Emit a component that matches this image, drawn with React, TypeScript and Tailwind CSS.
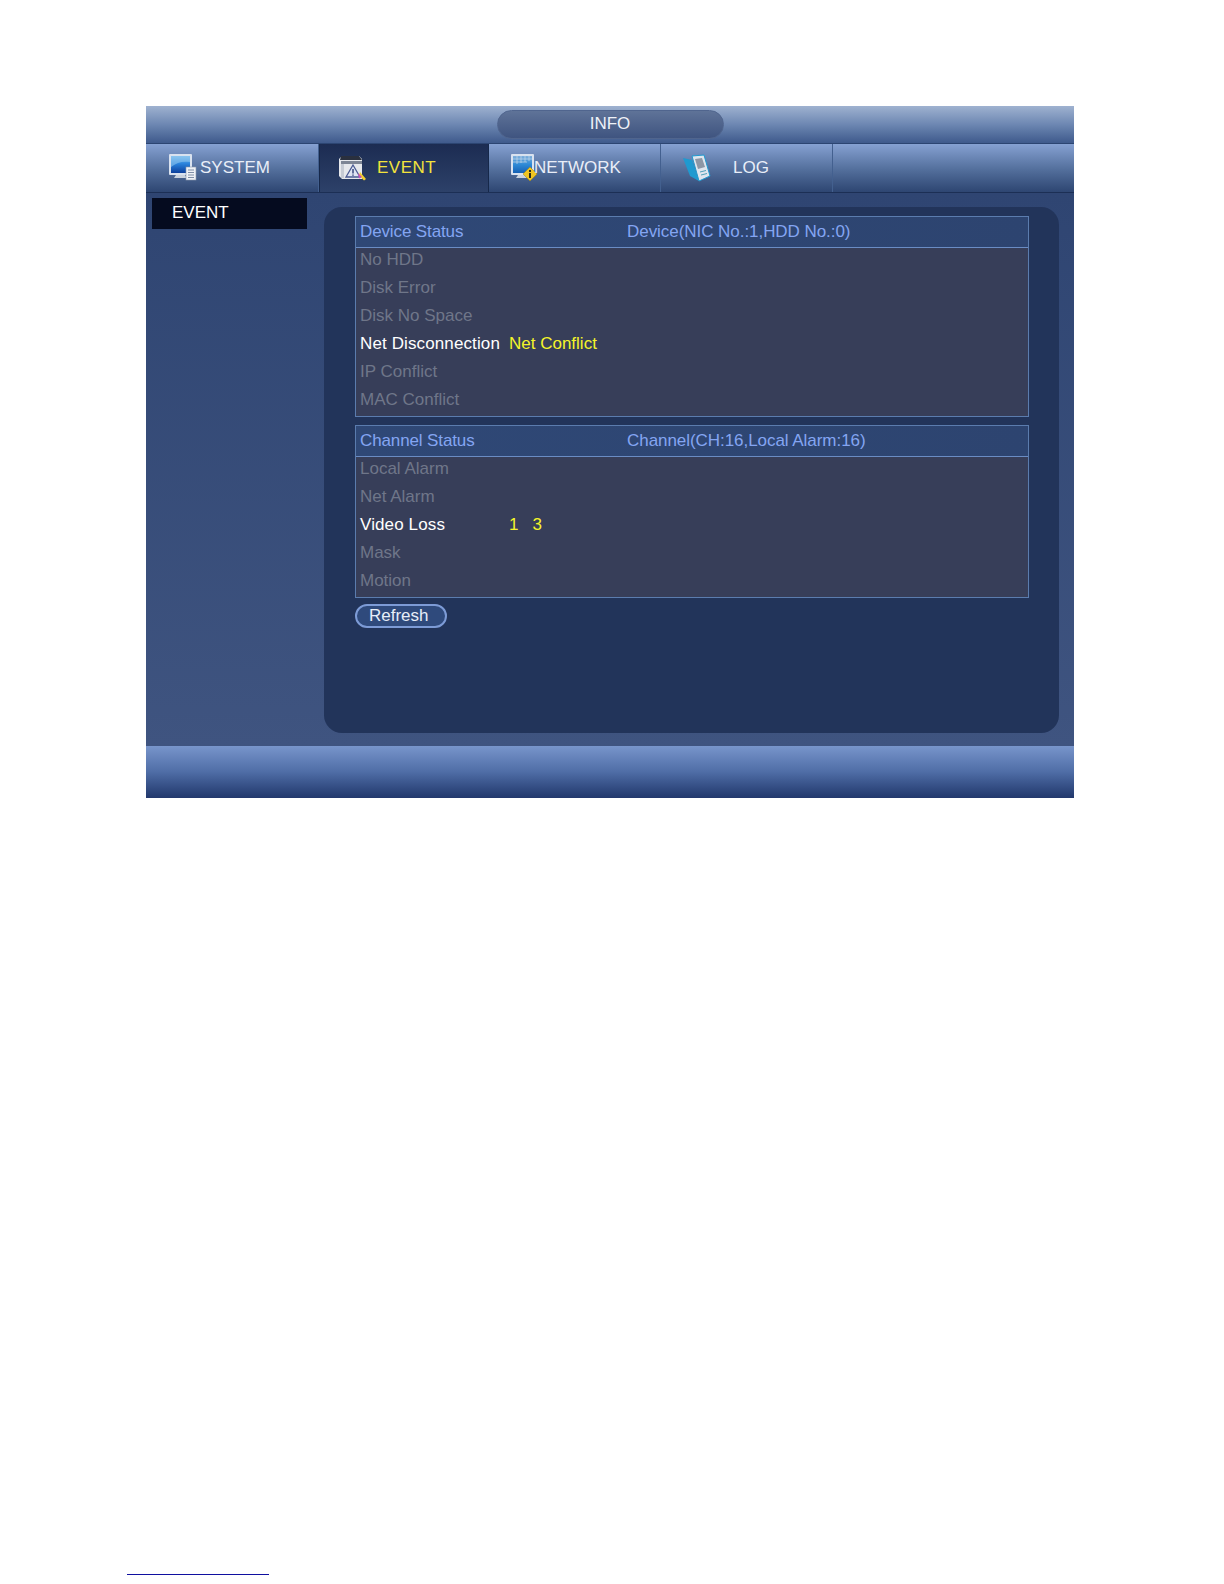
const FONT = "font-['Liberation_Sans',Arial,sans-serif]";

function SystemIcon() {
  return (
    <svg width="30" height="30" viewBox="0 0 30 30" className="shrink-0">
      <defs>
        <linearGradient id="sysScreen" x1="0" y1="0" x2="0" y2="1">
          <stop offset="0" stopColor="#7fc0f0" />
          <stop offset="0.45" stopColor="#2a83dc" />
          <stop offset="1" stopColor="#0c3f9c" />
        </linearGradient>
      </defs>
      <rect x="1" y="1" width="23" height="21" rx="1" fill="#d9e2ef" />
      <rect x="3" y="3" width="19" height="17" fill="url(#sysScreen)" />
      <path d="M3 14C9 9 15 8 22 9V3H3Z" fill="#8fc6ee" opacity="0.6" />
      <path d="M8 22h9l2 3H6Z" fill="#c9d2de" />
      <rect x="18" y="14" width="10" height="13" fill="#eef1f6" stroke="#8b97ab" strokeWidth="0.6" />
      <path d="M20 17h6M20 19.5h6M20 22h6M20 24.5h6" stroke="#7f8ea6" strokeWidth="1" />
    </svg>
  );
}

function EventIcon() {
  return (
    <svg width="30" height="30" viewBox="0 0 30 30" className="shrink-0">
      <path d="M2 6l3-3h17l3 3v20H5l-3-3Z" fill="#e6e8ec" />
      <path d="M4 3h18l3 4H3Z" fill="#2a303e" />
      <path d="M4 8h21v3H4Z" fill="#7d8594" />
      <path d="M4 11h3v14H4Z" fill="#c6cbd4" />
      <path d="M16 12l7 12H9Z" fill="#dfe5f2" stroke="#4a5a92" strokeWidth="1.3" />
      <path d="M16 16v4.5M16 21.5v1.3" stroke="#39477e" strokeWidth="1.5" />
      <path d="M23 19l6 7-2 1.5-5-5Z" fill="#f2cf2e" />
      <path d="M21 20l4 4-3 1.5Z" fill="#c94fb4" />
    </svg>
  );
}

function NetworkIcon() {
  return (
    <svg width="30" height="30" viewBox="0 0 30 30" className="shrink-0">
      <defs>
        <linearGradient id="netScreen" x1="0" y1="0" x2="0" y2="1">
          <stop offset="0" stopColor="#7fb0dc" />
          <stop offset="0.5" stopColor="#2f8ad6" />
          <stop offset="1" stopColor="#1560b4" />
        </linearGradient>
      </defs>
      <rect x="2" y="1" width="23" height="21" rx="1" fill="#d9e2ef" />
      <rect x="4" y="3" width="19" height="17" fill="url(#netScreen)" />
      <path d="M8 3v8M12 3v7M16 3v6M20 3v5M4 6h19M4 9h14" stroke="#c5d8ea" strokeWidth="0.7" />
      <path d="M9 22h8l2 3H7Z" fill="#c9d2de" />
      <path d="M21 14l7 7-7 7-7-7Z" fill="#f0c420" stroke="#9c8212" strokeWidth="0.5" />
      <rect x="20" y="20" width="2" height="5" fill="#2b2b1a" />
      <rect x="20" y="17" width="2" height="2" fill="#2b2b1a" />
    </svg>
  );
}

function LogIcon() {
  return (
    <svg width="30" height="30" viewBox="0 0 30 30" className="shrink-0">
      <path d="M2 5l9 2 7 21-9-5Z" fill="#1f9ad0" />
      <path d="M11 3l12-1 6 21-11 5Z" fill="#dfe6ee" stroke="#1f9ad0" strokeWidth="1" />
      <path d="M14 6l7-1 3 9-7 2Z" fill="#8d97a5" />
      <path d="M19 19l6-1.5M20 22l6-1.5" stroke="#4fa0b8" strokeWidth="1" />
    </svg>
  );
}

function Tab({ icon, label, active, cls, gap }: { icon: React.ReactNode; label: string; active?: boolean; cls: string; gap: string }) {
  return (
    <div
      className={`${cls} h-full flex items-center pb-[1px] ${
        active
          ? "bg-gradient-to-b from-[#1c2c52] to-[#2d4169] border-x border-[#16284a]"
          : "border-r border-[#43608f]"
      }`}
    >
      {icon}
      <span className={`${gap} text-[17px] leading-none ${active ? "text-[#f2e33c] tracking-[0.5px]" : "text-[#e9eef8]"}`}>{label}</span>
    </div>
  );
}

function Row({ label, value, on }: { label: string; value?: React.ReactNode; on?: boolean }) {
  return (
    <div className="h-[28px] flex items-center pl-[4px] pb-[4px] text-[17px]">
      <span className={`w-[149px] whitespace-nowrap ${on ? "text-white tracking-[0.12px]" : "text-[#6f7689]"}`}>{label}</span>
      {value && <span className="text-[#f4f42a] whitespace-pre">{value}</span>}
    </div>
  );
}

function StatusTable({ title, info, children }: { title: string; info: string; children: React.ReactNode }) {
  return (
    <div className="border border-[#5b7cae] bg-[#373e59]">
      <div className="h-[31px] flex items-center pl-[4px] text-[17px] text-[#84a5f2] bg-gradient-to-r from-[#2f4876] to-[#2d4470] border-b border-[#6a8cc4]">
        <span className="w-[267px] tracking-[-0.12px]">{title}</span>
        <span className="tracking-[-0.05px]">{info}</span>
      </div>
      {children}
    </div>
  );
}

export default function App() {
  return (
    <div className={`${FONT} relative w-[1224px] h-[1584px] bg-white pt-[106px] pl-[146px]`}>
      <div className="w-[928px] h-[692px] flex flex-col bg-[#3a4f7c]">
        {/* title bar */}
        <div className="h-[38px] flex items-center justify-center pb-[1px] bg-gradient-to-b from-[#9fb2d0] via-[#6d87b2] to-[#3f5a8c] border-b border-[#2c4572]">
          <div className="w-[227px] h-[29px] rounded-full bg-gradient-to-b from-[#5f7398] to-[#3f5480] border border-[#50658e] flex items-center justify-center text-[17px] text-[#eef2f8]">
            INFO
          </div>
        </div>

        {/* tabs */}
        <div className="h-[49px] flex items-stretch bg-gradient-to-b from-[#86a1d2] via-[#56729f] to-[#2e4672] border-b border-[#1c2f55]">
          <Tab cls="w-[173px] pl-[22px]" icon={<SystemIcon />} label="SYSTEM" gap="ml-[2px]" />
          <Tab cls="w-[170px] pl-[17px]" active icon={<EventIcon />} label="EVENT" gap="ml-[10px]" />
          <Tab cls="w-[172px] pl-[20px]" icon={<NetworkIcon />} label="NETWORK" gap="ml-[-5px]" />
          <Tab cls="w-[172px] pl-[20px]" icon={<LogIcon />} label="LOG" gap="ml-[22px]" />
        </div>

        {/* body */}
        <div className="flex-1 flex bg-gradient-to-b from-[#2f4572] to-[#3f5480]">
          <div className="w-[178px] pl-[6px] pt-[5px]">
            <div className="w-[155px] h-[31px] bg-[#050b1f] flex items-center pl-[20px] pb-[2px] text-[17px] text-white">EVENT</div>
          </div>
          <div className="w-[735px] h-[526px] mt-[14px] rounded-[18px] bg-[#22345a] pt-[9px] pl-[31px] pr-[30px]">
            <StatusTable title="Device Status" info="Device(NIC No.:1,HDD No.:0)">
              <Row label="No HDD" />
              <Row label="Disk Error" />
              <Row label="Disk No Space" />
              <Row label="Net Disconnection" value="Net Conflict" on />
              <Row label="IP Conflict" />
              <Row label="MAC Conflict" />
            </StatusTable>
            <div className="h-[8px]" />
            <StatusTable title="Channel Status" info="Channel(CH:16,Local Alarm:16)">
              <Row label="Local Alarm" />
              <Row label="Net Alarm" />
              <Row label="Video Loss" value="1   3" on />
              <Row label="Mask" />
              <Row label="Motion" />
            </StatusTable>
            <div className="mt-[6px] w-[92px] h-[24px] rounded-full border-2 border-[#7d9bd6] bg-[#2f4a7c] flex items-center pl-[12px] text-[17px] text-[#e8eef8]">
              Refresh
            </div>
          </div>
        </div>

        {/* footer */}
        <div className="h-[52px] bg-gradient-to-b from-[#7895cb] via-[#4f6da6] to-[#22386c]" />
      </div>
      <div className="absolute left-[127px] top-[1574px] w-[142px] h-[1px] bg-[#1010a0]" />
    </div>
  );
}
